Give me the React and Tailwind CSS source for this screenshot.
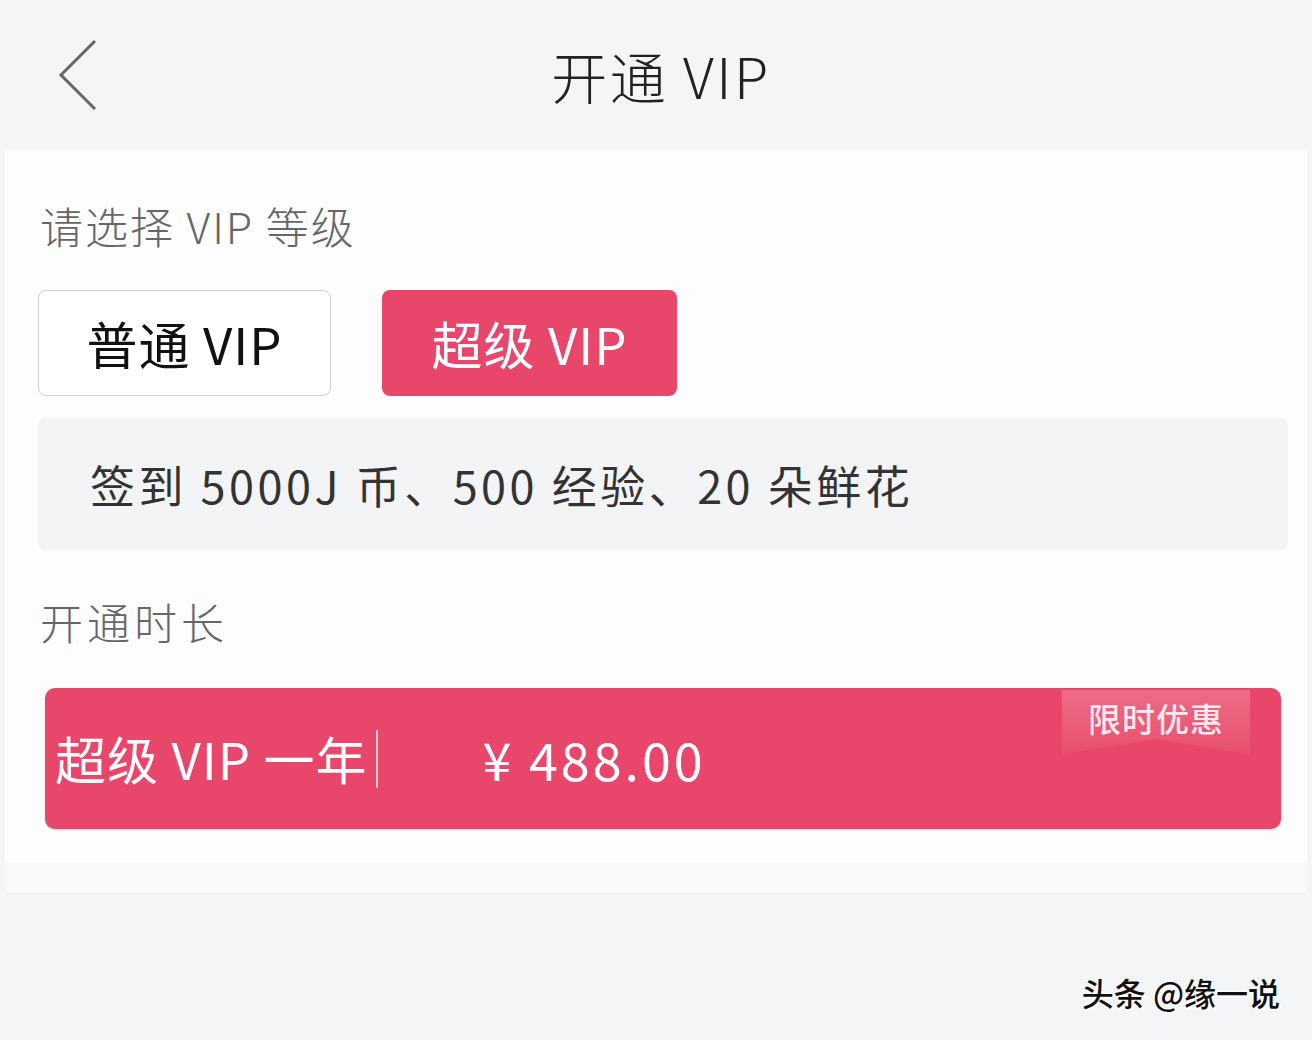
import React from "react";

const font = { fontFamily: '"Noto Sans CJK SC", "Noto Sans", sans-serif' };

export default function App() {
  return (
    <div className="w-[1312px] h-[1040px] bg-[#f4f5f7] flex flex-col overflow-hidden" style={font}>
      <div className="h-[150px] shrink-0 flex items-center relative px-[56px]">
        <svg width="44" height="74" viewBox="0 0 44 74" className="shrink-0">
          <path d="M39 3 L5 37 L39 71" fill="none" stroke="#666" strokeWidth="3" strokeLinejoin="miter" />
        </svg>
        <div className="absolute left-0 right-0 top-0 h-[150px] flex items-center justify-center pointer-events-none">
          <span className="text-[56px] text-[#222] leading-none tracking-[2.5px] pl-[10px] font-light">开通 VIP</span>
        </div>
      </div>
      <div className="bg-[#fdfdfe] mx-[5px] h-[712px] shrink-0 flex flex-col px-[33px]">
        <div className="h-[140px] flex items-center shrink-0 pt-[10px]">
          <span className="text-[43px] text-[#666] leading-none tracking-[2px] pl-[2px] font-light">请选择 VIP 等级</span>
        </div>
        <div className="flex gap-[51px] h-[106px] shrink-0">
          <div className="w-[293px] h-[106px] border border-[#cfcfd3] rounded-[8px] bg-white flex items-center justify-center">
            <span className="text-[51px] text-[#111] leading-none tracking-[1px]">普通 VIP</span>
          </div>
          <div className="w-[295px] h-[106px] rounded-[8px] bg-[#e8466b] flex items-center justify-center">
            <span className="text-[51px] text-white leading-none tracking-[1px]">超级 VIP</span>
          </div>
        </div>
        <div className="mt-[22px] h-[132px] shrink-0 bg-[#f3f4f6] rounded-[8px] flex items-center pl-[52px] w-[1250px]">
          <span className="text-[45px] text-[#333] leading-none tracking-[3.5px]">签到 5000J 币、500 经验、20 朵鲜花</span>
        </div>
        <div className="h-[138px] flex items-center shrink-0 pt-[4px]">
          <span className="text-[43px] text-[#666] leading-none pl-[2px] tracking-[4px] font-light">开通时长</span>
        </div>
        <div className="ml-[7px] w-[1236px] h-[141px] rounded-[10px] bg-[#e8466b] relative flex items-center shadow-[0_1px_2px_rgba(0,0,0,0.2)]">
          <span className="text-[51px] text-white leading-none pl-[10px] tracking-[1px]">超级 VIP 一年</span>
          <div className="w-[2px] h-[58px] bg-[#f5c8d4] ml-[9px]"></div>
          <span className="text-[52px] text-white leading-none ml-[104px] tracking-[3px]">¥ 488.00</span>
          <div className="absolute right-[31px] top-[2px] w-[188px] h-[70px] bg-gradient-to-b from-[#ec6c86] to-[#e94a6c] flex items-start justify-center pt-[12px]" style={{ clipPath: "polygon(0 0,100% 0,100% 92%,50% 70%,0 92%)" }}>
            <span className="text-[33px] text-[#fde8ee] leading-none font-medium tracking-[1px]">限时优惠</span>
          </div>
        </div>
      </div>
      <div className="h-[32px] mx-[5px] bg-[#f8f9fa] border-b border-[#eceef0] shrink-0"></div>
      <div className="flex-1 flex items-end justify-end pr-[32px] pb-[32px]">
        <span className="text-[32px] text-[#111] leading-none font-medium" style={{ textShadow: "2px 2px 0 #fff, -1px -1px 0 #fff" }}>头条 @缘一说</span>
      </div>
    </div>
  );
}
